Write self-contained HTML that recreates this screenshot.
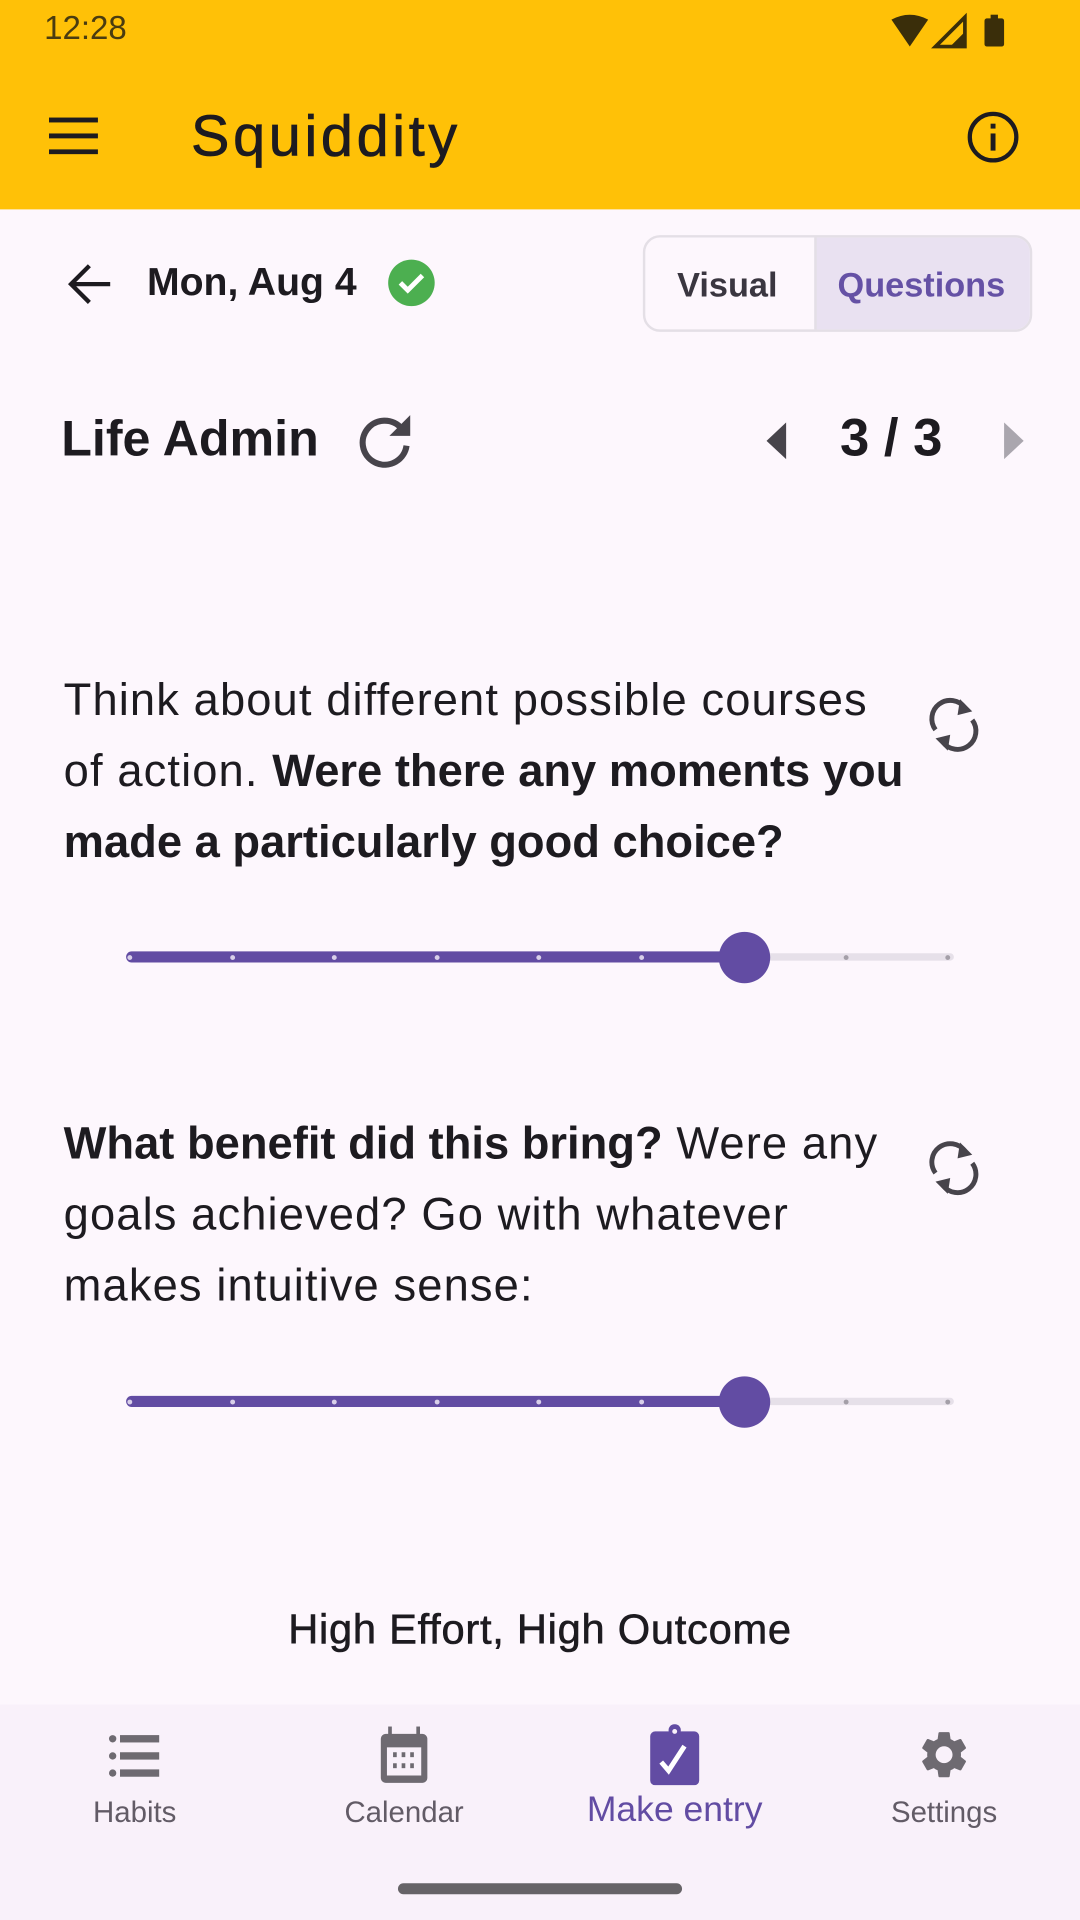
<!DOCTYPE html>
<html><head><meta charset="utf-8"><style>
*{margin:0;padding:0;box-sizing:border-box}
html,body{width:1080px;height:1920px;overflow:hidden;background:#fdf7fd;font-family:"Liberation Sans",sans-serif}
#w{width:882px;height:1568px;transform:scale(1.22449);transform-origin:0 0;position:relative}
.a{position:absolute}
.q{font-size:37px;line-height:58px;color:#1d1b20;left:52px;white-space:nowrap;letter-spacing:0.9px}
.q b{letter-spacing:0}
.nav{font-size:24px;color:#625b66;text-align:center;width:160px}
</style></head><body><div id="w">
<div class="a" style="left:0;top:0;width:882px;height:171px;background:#ffc107"></div>
<div class="a" style="left:36px;top:8px;font-size:27px;color:#4a3c10">12:28</div>
<svg class="a" style="left:726px;top:10px" width="100" height="30" viewBox="0 0 100 30"><path d="M2 6 Q17 -2 32 6 L17 28Z" fill="#3a2e0a"/><path d="M62 4 L62 28 L38 28Z" fill="none" stroke="#3a2e0a" stroke-width="3"/><path d="M50 28 L62 16 L62 28Z" fill="#3a2e0a"/><rect x="78" y="5" width="16" height="23" rx="2" fill="#3a2e0a"/><rect x="83" y="2" width="6" height="4" fill="#3a2e0a"/></svg>
<svg class="a" style="left:40px;top:96px" width="40" height="30"><rect y="0" width="40" height="4" fill="#1d1b20"/><rect y="13" width="40" height="4" fill="#1d1b20"/><rect y="26" width="40" height="4" fill="#1d1b20"/></svg>
<div class="a" style="left:156px;top:83px;font-size:47px;color:#1d1b20;letter-spacing:3px;-webkit-text-stroke:0.6px #1d1b20">Squiddity</div>
<svg class="a" style="left:788px;top:89px" width="46" height="46" viewBox="0 0 46 46"><circle cx="23" cy="23" r="19" fill="none" stroke="#1d1b20" stroke-width="3.5"/><rect x="21" y="20" width="4" height="14" fill="#1d1b20"/><rect x="21" y="12" width="4" height="4" fill="#1d1b20"/></svg>

<svg class="a" style="left:54px;top:214px" width="38" height="36" viewBox="0 0 38 36"><path d="M36 18H5M19 3L4 18L19 33" fill="none" stroke="#1d1b20" stroke-width="3.5"/></svg>
<div class="a" style="left:120px;top:212px;font-size:32px;font-weight:bold;color:#1d1b20">Mon, Aug 4</div>
<svg class="a" style="left:316px;top:211px" width="40" height="40"><circle cx="20" cy="20" r="19" fill="#4caf50"/><path d="M11 20l6 6 12-12" fill="none" stroke="#fff" stroke-width="4"/></svg>
<div class="a" style="left:525px;top:192px;width:318px;height:79px;border:2px solid #e4dfe6;border-radius:14px;overflow:hidden;background:#fdf7fd">
<div class="a" style="left:138px;top:0;width:180px;height:79px;background:#e9e1f1;border-left:2px solid #e4dfe6"></div>
<div class="a" style="left:26px;top:23px;font-size:28px;font-weight:bold;color:#3a3640">Visual</div>
<div class="a" style="left:157px;top:23px;font-size:28px;font-weight:bold;color:#6551a5">Questions</div></div>

<div class="a" style="left:50px;top:335px;font-size:41px;font-weight:bold;color:#1d1b20">Life Admin</div>
<svg class="a" style="left:290px;top:336px" width="50" height="50" viewBox="0 0 50 50"><path d="M38 14A18 18 0 1 0 42 28" fill="none" stroke="#47444b" stroke-width="5"/><path d="M28 20L45 20L45 3Z" fill="#47444b"/></svg>
<svg class="a" style="left:624px;top:345px" width="20" height="30"><path d="M18 0V30L2 15Z" fill="#47444b"/></svg>
<div class="a" style="left:686px;top:334px;font-size:43px;font-weight:bold;color:#1d1b20">3 / 3</div>
<svg class="a" style="left:818px;top:345px" width="20" height="30"><path d="M2 0V30L18 15Z" fill="#aaa6ae"/></svg>

<div class="a q" style="top:543px">Think about different possible courses<br>of action. <b>Were there any moments you</b><br><b>made a particularly good choice?</b></div>
<div class="a q" style="top:905px"><b>What benefit did this bring?</b> Were any<br>goals achieved? Go with whatever<br>makes intuitive sense:</div>
<svg class="a" style="left:756px;top:568px" width="46" height="48" viewBox="0 0 46 48"><path d="M8 28A15 15 0 0 1 32 10M38 20A15 15 0 0 1 14 38" fill="none" stroke="#47444b" stroke-width="4"/><path d="M28 3L38 13L26 16Z M18 45L8 35L20 32Z" fill="#47444b"/></svg>
<svg class="a" style="left:756px;top:930px" width="46" height="48" viewBox="0 0 46 48"><path d="M8 28A15 15 0 0 1 32 10M38 20A15 15 0 0 1 14 38" fill="none" stroke="#47444b" stroke-width="4"/><path d="M28 3L38 13L26 16Z M18 45L8 35L20 32Z" fill="#47444b"/></svg>

<svg class="a" style="left:0;top:750px" width="882" height="70">
<rect x="103" y="28.5" width="676" height="6" rx="3" fill="#e6e0e9"/><rect x="103" y="27" width="505" height="9" rx="4.5" fill="#624ca3"/>
<g fill="#d8cfe9"><circle cx="106" cy="32" r="2"/><circle cx="190" cy="32" r="2"/><circle cx="273" cy="32" r="2"/><circle cx="357" cy="32" r="2"/><circle cx="440" cy="32" r="2"/><circle cx="524" cy="32" r="2"/></g>
<g fill="#a49fa8"><circle cx="691" cy="32" r="2"/><circle cx="774" cy="32" r="2"/></g>
<circle cx="608" cy="32" r="21" fill="#624ca3"/></svg>
<svg class="a" style="left:0;top:1113px" width="882" height="70">
<rect x="103" y="28.5" width="676" height="6" rx="3" fill="#e6e0e9"/><rect x="103" y="27" width="505" height="9" rx="4.5" fill="#624ca3"/>
<g fill="#d8cfe9"><circle cx="106" cy="32" r="2"/><circle cx="190" cy="32" r="2"/><circle cx="273" cy="32" r="2"/><circle cx="357" cy="32" r="2"/><circle cx="440" cy="32" r="2"/><circle cx="524" cy="32" r="2"/></g>
<g fill="#a49fa8"><circle cx="691" cy="32" r="2"/><circle cx="774" cy="32" r="2"/></g>
<circle cx="608" cy="32" r="21" fill="#624ca3"/></svg>

<div class="a" style="left:0;width:882px;top:1312px;text-align:center;font-size:34px;color:#1d1b20;letter-spacing:0.6px;-webkit-text-stroke:0.5px #1d1b20">High Effort, High Outcome</div>

<div class="a" style="left:0;top:1392px;width:882px;height:176px;background:#f9f1fa"></div>
<svg class="a" style="left:88px;top:1415px" width="44" height="40"><g fill="#6e6a71"><circle cx="4" cy="5" r="3"/><circle cx="4" cy="19" r="3"/><circle cx="4" cy="33" r="3"/><rect x="10" y="2" width="32" height="6"/><rect x="10" y="16" width="32" height="6"/><rect x="10" y="30" width="32" height="6"/></g></svg>
<svg class="a" style="left:308px;top:1410px" width="44" height="48"><rect x="3" y="6" width="38" height="40" rx="4" fill="#6e6a71"/><rect x="8" y="17" width="28" height="23" fill="#f9f1fa"/><rect x="9" y="0" width="3" height="8" fill="#6e6a71"/><rect x="32" y="0" width="3" height="8" fill="#6e6a71"/><g fill="#6e6a71"><rect x="13" y="21" width="3" height="4"/><rect x="20" y="21" width="3" height="4"/><rect x="27" y="21" width="3" height="4"/><rect x="13" y="30" width="3" height="4"/><rect x="20" y="30" width="3" height="4"/><rect x="27" y="30" width="3" height="4"/></g></svg>
<svg class="a" style="left:529px;top:1408px" width="44" height="50"><rect x="2" y="6" width="40" height="44" rx="4" fill="#624ca3"/><circle cx="22" cy="5" r="5" fill="#624ca3"/><circle cx="22" cy="6" r="2" fill="#f9f1fa"/><path d="M11 31l6 7 13-20" fill="none" stroke="#fff" stroke-width="4"/></svg>
<svg class="a" style="left:748px;top:1410px" width="46" height="46" viewBox="0 0 24 24"><path fill="#6e6a71" d="M19.14 12.94c.04-.3.06-.61.06-.94 0-.32-.02-.64-.07-.94l2.03-1.58a.49.49 0 00.12-.61l-1.92-3.32a.49.49 0 00-.59-.22l-2.39.96c-.5-.38-1.03-.7-1.62-.94l-.36-2.54a.48.48 0 00-.48-.41h-3.84c-.24 0-.43.17-.47.41l-.36 2.54c-.59.24-1.13.57-1.62.94l-2.39-.96a.48.48 0 00-.59.22L2.74 8.87c-.12.21-.08.47.12.61l2.03 1.58c-.05.3-.09.63-.09.94s.02.64.07.94l-2.03 1.58a.49.49 0 00-.12.61l1.92 3.32c.12.22.37.29.59.22l2.39-.96c.5.38 1.03.7 1.62.94l.36 2.54c.05.24.24.41.48.41h3.84c.24 0 .44-.17.47-.41l.36-2.54c.59-.24 1.13-.56 1.62-.94l2.39.96c.22.08.47 0 .59-.22l1.92-3.32c.12-.22.07-.47-.12-.61l-2.01-1.58zM12 15.6A3.6 3.6 0 1112 8.4a3.6 3.6 0 010 7.2z"/></svg>
<div class="a nav" style="left:30px;top:1467px">Habits</div>
<div class="a nav" style="left:250px;top:1467px">Calendar</div>
<div class="a nav" style="left:461px;top:1462px;width:180px;font-size:29px;color:#624ca3">Make entry</div>
<div class="a nav" style="left:691px;top:1467px">Settings</div>
<div class="a" style="left:325px;top:1538px;width:232px;height:9px;border-radius:5px;background:#666367"></div>
</div></body></html>
